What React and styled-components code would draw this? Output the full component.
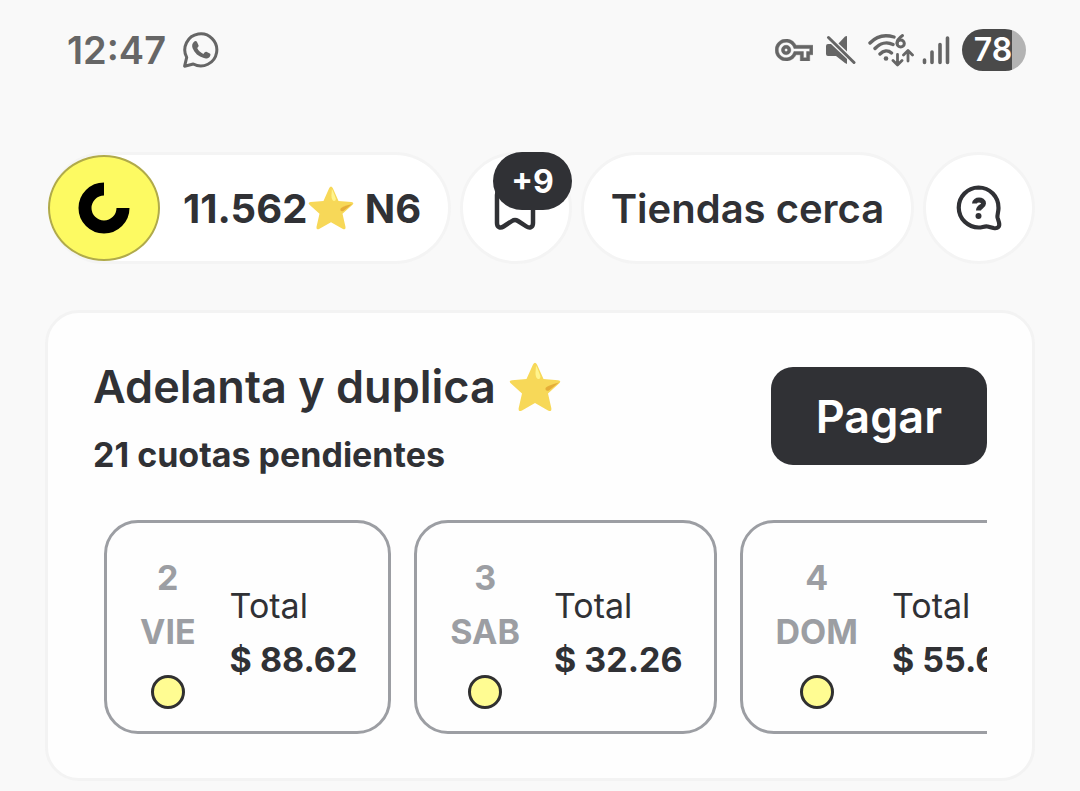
import React from "react";
import styled, { createGlobalStyle } from "styled-components";

const GlobalStyle = createGlobalStyle`
  * {
    box-sizing: border-box;
  }

  body {
    margin: 0;
    background: #f9f9f9;
    color: #303135;
    font-family: Inter, "Liberation Sans", sans-serif;
  }

  button {
    font-family: inherit;
    color: inherit;
    cursor: pointer;
  }

  svg {
    display: block;
    flex-shrink: 0;
  }
`;

const StatusBar = styled.header`
  display: flex;
  align-items: center;
  justify-content: space-between;
  height: 100px;
  padding: 0 54px 0 67px;
  color: #666666;
`;

const StatusGroup = styled.div`
  display: flex;
  align-items: center;
  gap: ${(props) => props.$gap}px;
`;

const Clock = styled.span`
  font-size: 38px;
  font-weight: 600;
  line-height: 52px;
`;

const Battery = styled.div`
  width: 64px;
  height: 42px;
  border-radius: 21px;
  padding-right: 2px;
  background: linear-gradient(to right, #4a4a4a 50px, #b3b3b3 50px);
  color: white;
  font-size: 32px;
  font-weight: 600;
  line-height: 42px;
  text-align: center;
`;

const Main = styled.main`
  padding: 52px 45px 11px;
`;

const ChipRow = styled.nav`
  display: flex;
  justify-content: space-between;
  padding-left: 3px;
  margin-bottom: 46px;
`;

const Chip = styled.button`
  display: flex;
  align-items: center;
  height: 112px;
  padding: 0 27px;
  border: 3px solid #f4f4f4;
  border-radius: 56px;
  background: white;
  font-size: 40px;
  font-weight: ${(props) => props.$weight || 600};
  white-space: nowrap;
`;

const PointsChip = styled(Chip)`
  padding-left: 0;
  border-left: none;
`;

const RoundChip = styled(Chip)`
  position: relative;
  justify-content: center;
  width: 112px;
  padding: 0;
`;

const Avatar = styled.span`
  display: flex;
  align-items: center;
  justify-content: center;
  width: 112px;
  height: 106px;
  margin-right: 23px;
  border: 2px solid #b0aa4a;
  border-radius: 50%;
  background: #fdfa62;
`;

const Points = styled.span`
  display: flex;
  align-items: center;
  gap: 1px;
`;

const Badge = styled.span`
  position: absolute;
  top: -3px;
  right: -3px;
  width: 79px;
  height: 58px;
  border-radius: 29px;
  background: #303135;
  color: white;
  font-size: 32px;
  font-weight: 700;
  line-height: 60px;
  text-align: center;
`;

const Card = styled.section`
  padding: 48px 45px 44px;
  border: 3px solid #f3f3f3;
  border-radius: 34px;
  background: #fefefe;
`;

const CardHeader = styled.div`
  display: flex;
  align-items: flex-start;
  justify-content: space-between;
  margin-bottom: 44px;
`;

const Title = styled.h1`
  display: flex;
  align-items: center;
  gap: 13px;
  margin: 0;
  font-size: 45px;
  font-weight: 600;
  line-height: 52px;
`;

const Subtitle = styled.p`
  margin: 21px 0 0;
  font-size: 34px;
  font-weight: 700;
  line-height: 42px;
`;

const PayButton = styled.button`
  height: 98px;
  margin-top: 6px;
  padding: 2px 45px 0;
  border: none;
  border-radius: 22px;
  background: #303135;
  font-size: 45px;
  font-weight: 600;
  line-height: 52px;

  && {
    color: white;
  }
`;

const Installments = styled.ul`
  display: flex;
  gap: 23px;
  margin: 0;
  padding: 0 0 0 11px;
  overflow: hidden;
  list-style: none;
`;

const Installment = styled.li`
  display: flex;
  flex-shrink: 0;
  gap: 34px;
  height: 214px;
  padding: 28px 31px 22px 33px;
  border: 3px solid #9c9ea3;
  border-radius: 34px;
  font-size: 34px;
  line-height: 54px;
`;

const Day = styled.div`
  display: flex;
  flex-direction: column;
  align-items: center;
  color: #9c9ea3;
  font-weight: 700;
`;

const Dot = styled.span`
  width: 34px;
  height: 34px;
  margin-top: 16px;
  border: 3px solid #303030;
  border-radius: 50%;
  background: #fffc92;
`;

const Amount = styled.div`
  display: flex;
  flex-direction: column;
  padding-top: 28px;

  strong {
    font-weight: 700;
  }
`;

const WhatsAppIcon = () => (
  <svg width="38" height="38" viewBox="0 0 38 38" fill="none">
    <path
      d="M2.6 35.2 4.7 26.4A16 16 0 1 1 11.3 33z"
      stroke="currentColor"
      strokeWidth="3"
      strokeLinejoin="round"
    />
    <path
      d="M12.3 10.5c.8-.8 2.2-.7 2.7.4l1.5 3.3c.4 1-.2 1.7-1.3 2.9 1.3 2.7 3.3 4.6 6.2 5.8 1.3-1.6 2-2.5 3-2.1l3.4 1.7c1 .6.8 1.9.1 2.9-1.3 1.9-3.7 2.5-6 1.7-5.5-1.7-9.4-5-11.3-9.9-.9-2.5-.5-5 1.7-6.7z"
      fill="currentColor"
    />
  </svg>
);

const KeyIcon = () => (
  <svg width="38" height="22" viewBox="0 5 24 14" fill="currentColor" stroke="currentColor" strokeWidth="0.3">
    <path d="M22 19h-6v-4h-2.68c-1.14 2.42-3.6 4-6.32 4-3.86 0-7-3.14-7-7s3.14-7 7-7c2.72 0 5.17 1.58 6.32 4H24v6h-2v4zm-4-2h2v-4h2v-2H11.94l-.23-.67C11.01 8.34 9.11 7 7 7c-2.76 0-5 2.24-5 5s2.24 5 5 5c2.11 0 4.01-1.34 4.71-3.33l.23-.67H18v4zM7 15c-1.65 0-3-1.35-3-3s1.35-3 3-3 3 1.35 3 3-1.35 3-3 3zm0-4c-.55 0-1 .45-1 1s.45 1 1 1 1-.45 1-1-.45-1-1-1z" />
  </svg>
);

const MuteIcon = () => (
  <svg width="31" height="32" viewBox="0 0 31 32" fill="currentColor">
    <path d="M3 10H6L22 25V30L20 29 11 22H3Q1 22 1 20V12Q1 10 3 10Z" />
    <path d="M13.500 9.500 20 2.500 22 2V17.500Z" />
    <path d="M3.500 3.500 29 28.500" stroke="currentColor" strokeWidth="3" strokeLinecap="round" />
  </svg>
);

const WifiIcon = () => (
  <svg width="46" height="34" viewBox="0 0 46 34" fill="none" stroke="currentColor" strokeLinecap="round">
    <path
      d="M2 10C9 2.500 17 1.200 26 4M7 15.500C12 10 19 8.500 25 11.500M12 21C15.500 17.500 20 17 23.500 20"
      strokeWidth="3.400"
    />
    <circle cx="18" cy="25.500" r="2.300" fill="currentColor" stroke="none" />
    <path d="M34.500 2.500C31 5 29 7.500 29 10" strokeWidth="3" />
    <circle cx="32.700" cy="10.500" r="3.600" strokeWidth="3" />
    <path
      d="M29.500 21.500V31M25 27.500 29.500 32 34 27.500M40 28V18.500M35.500 22 40 17.500 44.500 22"
      strokeWidth="2.800"
      strokeLinejoin="round"
    />
  </svg>
);

const SignalIcon = () => (
  <svg width="28" height="32" viewBox="0 0 28 32" stroke="currentColor" strokeWidth="3.600" strokeLinecap="round">
    <path d="M2.500 26V28.500M10 18V28.500M18 10.500V28.500M25.500 4V28.500" />
  </svg>
);

const LogoIcon = () => (
  <svg width="52" height="52" viewBox="0 0 52 52">
    <path d="M26 7A19 19 0 1 0 45 26" fill="none" stroke="#000000" strokeWidth="13" />
  </svg>
);

const BookmarkIcon = () => (
  <svg width="46" height="46" viewBox="0 0 46 46" fill="none">
    <path
      d="M4 10Q4 3 11 3H33Q40 3 40 10V38C40 42.500 36.500 43.500 33.500 41.500L25 36Q22 34 19 36L10.500 41.500C7.500 43.500 4 42.500 4 38Z"
      stroke="currentColor"
      strokeWidth="4.500"
      strokeLinejoin="round"
    />
  </svg>
);

const HelpIcon = () => (
  <svg width="48" height="48" viewBox="0 0 48 48" fill="none" stroke="currentColor">
    <path
      d="M23.500 3.500A20 20 0 1 0 24 43.500C27 43.500 29.500 42 32.500 42.500L38.500 44C43 45 45 42.500 44 38.500L42.500 33.500C42 31 43.500 28 43.500 24A20 20 0 0 0 23.500 3.500Z"
      strokeWidth="4.200"
      strokeLinejoin="round"
    />
    <path d="M19.500 19.500C19.500 15 28.500 14.800 28.500 19.500C28.500 22.800 23.500 22.600 23.500 26.500" strokeWidth="5" />
    <circle cx="23.500" cy="32" r="3" fill="currentColor" stroke="none" />
  </svg>
);

const StarIcon = ({ size }) => (
  <svg width={size} height={size} viewBox="0 0 52 52">
    <path
      d="M24 3.500Q26 0 28 3.500L34.500 18 49 19.200Q53 19.700 50 22.500L39 32.500 42.300 47Q43 51.500 39 49.500L26 42 13 49.500Q9 51.500 9.700 47L13 32.500 2 22.500Q-1 19.700 3 19.200L17.500 18Z"
      fill="#f7d858"
    />
    <path d="M27 4.500Q29 8 31.500 15.500Q31.500 18.500 29 18Q26.500 17 26.500 12Z" fill="#fff48c" />
    <path d="M50 21.500 40 29.500Q36 30.500 36.500 27Q38 24.500 50 21.500Z" fill="#e5ad38" />
  </svg>
);

const installments = [
  { day: 2, weekday: "VIE", total: "88.62" },
  { day: 3, weekday: "SAB", total: "32.26" },
  { day: 4, weekday: "DOM", total: "55.62" },
];

const App = () => {
  return (
    <>
      <GlobalStyle />
      <StatusBar>
        <StatusGroup $gap={16}>
          <Clock>12:47</Clock>
          <WhatsAppIcon />
        </StatusGroup>
        <StatusGroup $gap={12}>
          <KeyIcon />
          <MuteIcon />
          <StatusGroup $gap={8}>
            <WifiIcon />
            <SignalIcon />
          </StatusGroup>
          <Battery>78</Battery>
        </StatusGroup>
      </StatusBar>

      <Main>
        <ChipRow>
          <PointsChip $weight={700}>
            <Avatar>
              <LogoIcon />
            </Avatar>
            <Points>
              11.562
              <StarIcon size={46} />
              <span>&nbsp;N6</span>
            </Points>
          </PointsChip>
          <RoundChip aria-label="Guardados">
            <BookmarkIcon />
            <Badge>+9</Badge>
          </RoundChip>
          <Chip>Tiendas cerca</Chip>
          <RoundChip aria-label="Ayuda">
            <HelpIcon />
          </RoundChip>
        </ChipRow>

        <Card>
          <CardHeader>
            <div>
              <Title>
                Adelanta y duplica
                <StarIcon size={52} />
              </Title>
              <Subtitle>21 cuotas pendientes</Subtitle>
            </div>
            <PayButton>Pagar</PayButton>
          </CardHeader>

          <Installments>
            {installments.map((item) => (
              <Installment key={item.day}>
                <Day>
                  <span>{item.day}</span>
                  <span>{item.weekday}</span>
                  <Dot />
                </Day>
                <Amount>
                  <span>Total</span>
                  <strong>$ {item.total}</strong>
                </Amount>
              </Installment>
            ))}
          </Installments>
        </Card>
      </Main>
    </>
  );
};

export default App;
